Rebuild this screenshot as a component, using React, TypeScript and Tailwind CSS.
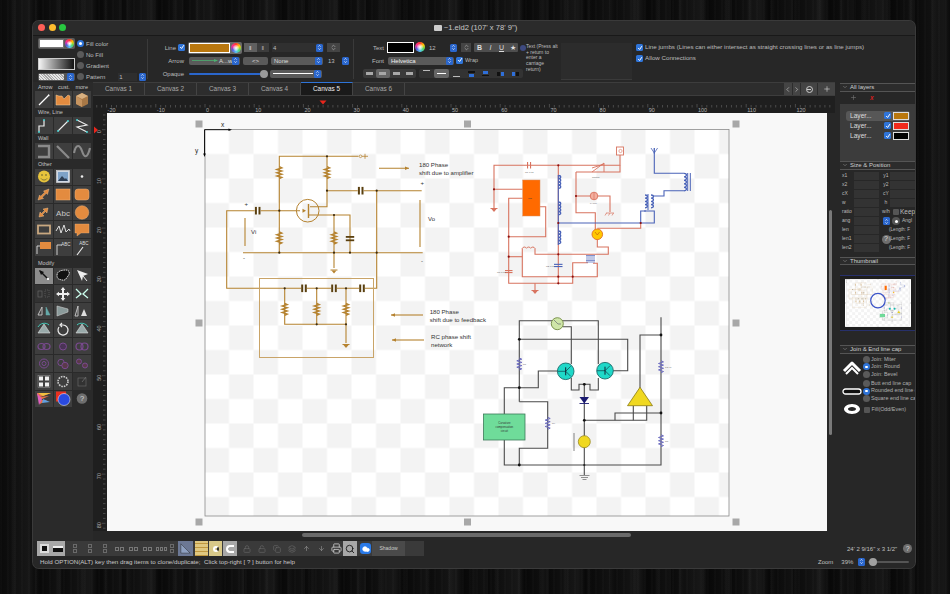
import React, { createContext, useContext } from "react";
import { ArrowUp, ArrowDown, Lock, LockOpen, Printer, Search, Cloud, Plus, ChevronLeft, ChevronRight, ChevronDown, ChevronsUpDown, Copy, Layers } from "lucide-react";

const BR = "#b5822f";
const RD = "#d8735f";
const BL = "#4a63b8";
const GY = "#4a4a4a";
const NoText = createContext(false);

const W = ({ p, c, w = 1.1 }: { p: string; c: string; w?: number }) => <polyline points={p} fill="none" stroke={c} strokeWidth={w} />;
const D = ({ x, y, c = "#3a2a10", r = 1.1 }: { x: number; y: number; c?: string; r?: number }) => <circle cx={x} cy={y} r={r} fill={c} />;
const Res = ({ x, y, c, w = 1.4 }: { x: number; y: number; c: string; w?: number }) => (
  <path d={`M${x} ${y - 6}l2.5 1.2l-5 1.6l5 1.6l-5 1.6l5 1.6l-5 1.6l5 1.6l-2.5 1.2`} fill="none" stroke={c} strokeWidth={w} />
);
const Cap = ({ x, y, c = "#5a4010" }: { x: number; y: number; c?: string }) => (
  <g>
    <rect x={x - 3} y={y - 3.8} width={6} height={7.6} fill="#fff" />
    <rect x={x - 2.8} y={y - 3.8} width={2} height={7.6} fill={c} />
    <rect x={x + 0.8} y={y - 3.8} width={2} height={7.6} fill={c} />
  </g>
);
const Coil = ({ x, y, c, n = 4, h = 3.2 }: { x: number; y: number; c: string; n?: number; h?: number }) => {
  let d = `M${x} ${y}`;
  for (let i = 0; i < n; i++) d += `a2.4 ${h / 2} 0 1 1 0 ${h}`;
  return <path d={d} fill="none" stroke={c} strokeWidth={1.3} />;
};
const Gnd = ({ x, y, c }: { x: number; y: number; c: string }) => (
  <g>
    <line x1={x - 3.5} x2={x + 3.5} y1={y} y2={y} stroke={c} strokeWidth={1} />
    <path d={`M${x - 2.5} ${y + 0.5}h5l-2.5 3z`} fill={c} />
  </g>
);
const T = ({ x, y, s, size = 6.1, c = "#333", a }: { x: number; y: number; s: string; size?: number; c?: string; a?: "middle" }) => {
  const hide = useContext(NoText);
  if (hide) return null;
  return <text x={x} y={y} fontSize={size} fill={c} textAnchor={a} fontFamily="Liberation Sans, sans-serif">{s}</text>;
};
const Arrow = ({ x1, x2, y, c = BR }: { x1: number; x2: number; y: number; c?: string }) => {
  const dir = x2 > x1 ? -1 : 1;
  return (
    <g>
      <line x1={x1} x2={x2} y1={y} y2={y} stroke={c} strokeWidth={1.1} />
      <path d={`M${x2} ${y}l${dir * 4} -1.8v3.6z`} fill={c} />
    </g>
  );
};

function Diagram() {
  const handles = [[199, 124], [467.5, 124], [736, 124], [199, 323], [736, 323], [199, 522], [467.5, 522], [736, 522]];
  return (
    <>
      <defs>
        <pattern id="chk" x="204.5" y="129.5" width="49" height="49" patternUnits="userSpaceOnUse">
          <rect width="49" height="49" fill="#fff" />
          <rect x="24.5" width="24.5" height="24.5" fill="#f3f3f3" />
          <rect y="24.5" width="24.5" height="24.5" fill="#f3f3f3" />
        </pattern>
      </defs>
      <rect x="205" y="129.5" width="524" height="386.5" fill="url(#chk)" stroke="#8a8a8a" strokeWidth="0.8" />
      {handles.map(([x, y]) => <rect key={`${x}-${y}`} x={x - 3.5} y={y - 3.5} width="7" height="7" fill="#a8a8a8" />)}
      {/* axes */}
      <line x1="204.5" y1="129.7" x2="229" y2="129.7" stroke="#000" strokeWidth="0.9" />
      <line x1="204.5" y1="129.7" x2="204.5" y2="154" stroke="#000" strokeWidth="0.9" />
      <path d="M232 129.7l-3.5 -1.3v2.6zM204.5 157l-1.3 -3.5h2.6z" fill="#000" />
      <T x={221} y={127} s="x" size={6.5} c="#222" />
      <T x={195} y={153} s="y" size={6.5} c="#222" />

      {/* amplifier */}
      <W c={BR} p="279.3,252.7 279.3,156.3 358.5,156.3" />
      <circle cx="360.5" cy="156.3" r="1.3" fill="none" stroke={BR} strokeWidth="0.7" />
      <path d="M362 156.3h6M365 153.8v5" stroke={BR} strokeWidth="0.8" fill="none" />
      <W c={BR} p="327,156.3 327,206.7 310,206.7" />
      <W c={BR} p="327,190.7 421.7,190.7" />
      <W c={BR} p="376.7,190.7 376.7,288.3 226.7,288.3 226.7,210.7 300,210.7" />
      <W c={BR} p="308.5,215 350,215 350,252.7" />
      <W c={BR} p="334,215 334,268" />
      <W c={BR} p="243,252.7 422.7,252.7" />
      <circle cx="307.7" cy="210.7" r="11.3" fill="none" stroke={BR} strokeWidth="1" />
      <line x1="308.5" y1="204" x2="308.5" y2="218" stroke={BR} strokeWidth="1.4" />
      <path d="M306 210.7l-3.5 -2v4z" fill={BR} />
      <Res x={279.3} y={172.7} c={BR} />
      <Res x={279.3} y={238} c={BR} />
      <Res x={327} y={172.7} c={BR} />
      <Res x={334} y={238} c={BR} />
      <Cap x={360.7} y={190.7} />
      <Cap x={257.7} y={210.7} />
      <rect x="345.8" y="236" width="8.4" height="1.8" fill="#5a4010" />
      <rect x="345.8" y="239.4" width="8.4" height="1.8" fill="#5a4010" />
      <Gnd x={334} y={270} c={BR} />
      {[[327, 156.3], [327, 190.7], [376.7, 190.7], [279.3, 210.7], [334, 215], [279.3, 252.7], [334, 252.7], [350, 252.7], [376.7, 252.7]].map(([x, y]) => <D key={`${x}-${y}`} x={x} y={y} />)}
      <line x1="245" y1="218" x2="245" y2="246" stroke={BR} strokeWidth="1.1" />
      <line x1="420" y1="200" x2="420" y2="247" stroke={BR} strokeWidth="1.1" />
      <T x={251} y={234} s="Vi" size={6} />
      <T x={428} y={221} s="Vo" size={6} />
      <T x={244.5} y={206} s="+" size={6} />
      <T x={243} y={260} s="-" size={6} />
      <T x={420.5} y={185} s="+" size={6} />
      <T x={421} y={263} s="-" size={6} />
      <Arrow x1={379} x2={409} y={168.3} />
      <T x={419} y={167} s="180 Phase" />
      <T x={419} y={175} s="shift due to amplifier" />
      {/* feedback */}
      <rect x="259.5" y="278.5" width="114" height="79" fill="none" stroke="#c9a468" strokeWidth="1" />
      <W c={BR} p="284.7,288.3 284.7,324.3 346,324.3" />
      <W c={BR} p="316.7,288.3 316.7,324.3" />
      <W c={BR} p="346,288.3 346,343" />
      <Res x={284.7} y={309.3} c={BR} />
      <Res x={316.7} y={309.3} c={BR} />
      <Res x={346} y={309.3} c={BR} />
      <Cap x={304} y={288.3} />
      <Cap x={334} y={288.3} />
      <Cap x={362} y={288.3} />
      <Gnd x={346} y={344.5} c={BR} />
      {[[284.7, 288.3], [316.7, 288.3], [346, 288.3], [316.7, 324.3], [346, 324.3]].map(([x, y]) => <D key={`f${x}-${y}`} x={x} y={y} />)}
      <Arrow x1={423} x2={391} y={315} />
      <Arrow x1={424} x2={392} y={340} />
      <T x={429.7} y={314} s="180 Phase" />
      <T x={429.7} y={322} s="shift due to feedback" />
      <T x={431} y={339} s="RC phase shift" />
      <T x={431} y={346.5} s="network" />

      {/* red circuit */}
      <W c={RD} p="494,208 494,165.3 620,165.3 620,155" />
      <W c={RD} p="494,189.3 522.7,189.3" />
      <W c={RD} p="522.7,198.3 508.7,198.3 508.7,283.3 572.7,283.3 572.7,262.7 588,262.7" />
      <W c={RD} p="540,206.7 545.7,206.7 545.7,236.7 508.7,236.7" />
      <W c={RD} p="508.7,256.7 522.3,256.7" />
      <W c={RD} p="522.3,248.3 522.3,276.7 597.3,276.7 597.3,263.3 593,263.3" />
      <W c={RD} p="535,248.3 535,254.3 608.3,254.3 608.3,247 597.3,247 597.3,239" />
      <W c={RD} p="576,172 620,172 620,165.3" />
      <W c={RD} p="576,172 576,212.7 595.3,212.7 595.3,230" />
      <W c={RD} p="576,196 610,196 610,212" />
      <W c={RD} p="597.3,228.3 640.7,228.3 640.7,223" />
      <W c={RD} p="535,283.3 535,290" />
      <W c={BL} p="558.3,223 654.3,223 654.3,211 644,211" />
      <W c={RD} p="558.3,165.3 558.3,283.3" />
      <W c={BL} p="558.3,175 558.3,245" />
      <W c={BL} p="640.7,223 640.7,211 646,211" />
      <W c={BL} p="654.3,148 654.3,173.3 684,173.3" />
      <W c={BL} p="684,190.7 664,190.7 664,196 653.3,196" />
      <path d="M651 148l3.3 5l3.3 -5M654.3 148v6" fill="none" stroke={BL} strokeWidth="0.8" />
      <Coil x={684} y={173.3} c={BL} n={5} h={3.5} />
      <path d="M687.7 173v18M690.3 173v18" stroke={BL} strokeWidth="1" />
      <rect x="522.7" y="180" width="17.3" height="36" fill="#ff6a00" stroke="#d9905f" strokeWidth="0.5" />
      <T x={528} y={199} s="IC1" size={2.5} c="#333" />
      <Gnd x={494} y={208.5} c={RD} />
      <Gnd x={535} y={290.5} c={RD} />
      <rect x="527" y="162" width="1.1" height="6.5" fill={RD} />
      <rect x="530" y="162" width="1.1" height="6.5" fill={RD} />
      <Coil x={558.3} y={175.5} c={BL} n={4} h={3.2} />
      <Coil x={558.3} y={202} c={BL} n={4} h={3.2} />
      <Coil x={558.3} y={231} c={BL} n={4} h={3.2} />
      <path d="M522.3 248.3a2.4 2.4 0 0 1 4.2 0a2.4 2.4 0 0 1 4.2 0a2.4 2.4 0 0 1 4.2 0" fill="none" stroke={RD} strokeWidth="1" />
      <rect x="554" y="263.8" width="8.5" height="1.1" fill={BL} />
      <rect x="554" y="266" width="8.5" height="1.1" fill={BL} />
      <rect x="505" y="270" width="7.5" height="1.1" fill={RD} />
      <rect x="505" y="272" width="7.5" height="1.1" fill={RD} />
      <path d="M586 255.5h9M586 257h9M586 259h9M586 260.5h9M586 262h9" stroke={BL} strokeWidth="0.7" />
      <Coil x={645} y={195} c={BL} n={4} h={3.2} />
      <Coil x={651} y={195} c={BL} n={4} h={3.2} />
      <line x1="648" y1="194" x2="648" y2="210" stroke={BL} strokeWidth="1" />
      <circle cx="597.3" cy="234.3" r="5.3" fill="#ffc800" stroke="#e07020" strokeWidth="0.9" />
      <path d="M595 232l2.3 3l2.3 -3" stroke="#c05010" strokeWidth="0.6" fill="none" />
      <circle cx="594" cy="196" r="3.8" fill="#f4b0a0" stroke={RD} strokeWidth="0.9" />
      <path d="M594 192.5v7" stroke={RD} strokeWidth="0.7" />
      <path d="M592 172l12 -9M592 168l12 -4M604 163v9" stroke={RD} strokeWidth="0.9" fill="none" />
      <rect x="616.5" y="147" width="7" height="8" fill="#fff" stroke={RD} strokeWidth="0.9" />
      <circle cx="620.5" cy="151" r="1.6" fill="none" stroke={RD} strokeWidth="0.6" />
      <path d="M606 213h8M606.5 213l-1.5 2.500M610 213l-1.5 2.500M613.5 213l-1.5 2.500" stroke={RD} strokeWidth="0.7" fill="none" />
      {[[558.3, 165.3], [494, 189.3], [508.7, 236.7], [508.7, 256.7], [558.3, 223], [558.3, 254.3], [558.3, 276.7], [558.3, 283.3], [576, 196], [640.7, 223], [572.7, 276.7]].map(([x, y]) => <D key={`r${x}-${y}`} x={x} y={y} c="#8a1010" />)}
      <T x={525} y={173} s="C1 0.01" size={2.5} c="#666" />
      <T x={592} y={178} s="Switch" size={2.5} c="#666" />
      <T x={590} y={204} s="LAMP" size={2.5} c="#666" />
      <T x={546} y={267} s="C2 0.01" size={2.5} c="#666" />
      <T x={497} y={273} s="C3 0.01" size={2.5} c="#666" />

      {/* gray circuit */}
      <W c={GY} p="519.3,401.7 519.3,320.7 598.3,320.7 598.3,364" />
      <W c={GY} p="563,326.7 571.3,326.7 571.3,364" />
      <W c={GY} p="519.3,339.3 627.7,339.3 627.7,370.7 613,370.7" />
      <W c={GY} p="557.5,371 538.3,371 538.3,387.7 504.3,387.7 504.3,414" />
      <W c={GY} p="519.3,401.7 547.7,401.7 547.7,448.3 519.3,448.3 519.3,465" />
      <W c={GY} p="504.3,440 504.3,465 661,465 661,317.3" />
      <W c={GY} p="661,335 640,335 640,388" />
      <W c={GY} p="571.3,378 571.3,390 579,390 579,384.3 590,384.3 590,390 598.3,390 598.3,378" />
      <W c={GY} p="584.3,384.3 584.3,475" />
      <W c={GY} p="584.3,420.3 646.7,420.3 646.7,405.7" />
      <W c={GY} p="661,413 615,413 615,420.3" />
      <W c={GY} p="633.3,405.7 633.3,420.3" />
      <line x1="574" y1="433" x2="574" y2="451" stroke="#777" strokeWidth="0.9" />
      <path d="M579.5 475.5h10M581 477.5h7M582.5 479.5h4" stroke="#666" strokeWidth="0.7" />
      <Res x={519.3} y={364} c="#6a6ac0" w={1} />
      <Res x={547.7} y={423.3} c="#6a6ac0" w={1} />
      <Res x={661} y={366.7} c="#6a6ac0" w={1} />
      <Res x={661} y={440.7} c="#6a6ac0" w={1} />
      <circle cx="557.3" cy="323.7" r="6" fill="#cfe6a8" stroke="#708a40" strokeWidth="0.9" />
      <path d="M554 320l4 4h3" stroke="#556" strokeWidth="0.6" fill="none" />
      {[[565.7, 371.3], [605, 370.7]].map(([x, y]) => (
        <g key={x}>
          <circle cx={x} cy={y} r="8.3" fill="#1fd8c8" stroke="#1b6a6a" strokeWidth="0.9" />
          <line x1={x} x2={x} y1={y - 4} y2={y + 4} stroke="#123" strokeWidth="1" />
          <path d={`M${x} ${y}l5 -5M${x} ${y}l5 5M${x - 8} ${y}h8`} stroke="#123" strokeWidth="0.6" />
        </g>
      ))}
      <path d="M579.5 397h9.5l-4.700 6.500z" fill="#1a1a70" />
      <line x1="579.5" x2="589" y1="403.5" y2="403.5" stroke="#1a1a70" strokeWidth="0.9" />
      <circle cx="584.3" cy="441.7" r="6" fill="#f0d820" stroke="#9a8a20" strokeWidth="0.8" />
      <path d="M640 387.3l12.5 18.4h-25z" fill="#f0d820" stroke="#8a7a10" strokeWidth="0.8" />
      <rect x="483.5" y="414" width="41.5" height="26" fill="#6fdc9a" stroke="#3d7a5a" strokeWidth="0.8" />
      <T x={504.3} y={424} s="Curvature" size={2.8} a="middle" />
      <T x={504.3} y={428} s="compensation" size={2.8} a="middle" />
      <T x={504.3} y={432} s="circuit" size={2.8} a="middle" />
      {[[519.3, 339.3], [519.3, 387.7], [519.3, 465], [584.3, 384.3], [584.3, 420.3], [661, 335], [661, 413]].map(([x, y]) => <D key={`g${x}-${y}`} x={x} y={y} c="#111" r={1.4} />)}
      <D x={584.3} y={465} c="#222" />
      <T x={523} y={365} s="R1" size={2.5} c="#666" />
      <T x={552} y={424} s="R4" size={2.5} c="#666" />
      <T x={665} y={368} s="3.5 M" size={2.5} c="#666" />
      <T x={665} y={442} s="R3" size={2.5} c="#666" />
    </>
  );
}

const Radio = ({ on }: { on?: boolean }) => (
  <span className={`inline-flex w-[7px] h-[7px] rounded-full items-center justify-center shrink-0 ${on ? "bg-[#2f74d8]" : "bg-[#5a5a5a]"}`}>
    {on && <span className="w-[2.5px] h-[2.5px] rounded-full bg-white" />}
  </span>
);
const Check = ({ on = true }: { on?: boolean }) => (
  <span className={`inline-flex w-[7px] h-[7px] rounded-[1.5px] shrink-0 items-center justify-center ${on ? "bg-[#2f74d8]" : "bg-[#555]"}`}>
    {on && <svg viewBox="0 0 8 8" className="w-[6px] h-[6px]"><path d="M1.5 4l2 2l3 -4.500" fill="none" stroke="#fff" strokeWidth="1.3" /></svg>}
  </span>
);
const Step = () => (
  <span className="inline-flex w-[7px] h-[8px] rounded-[1.5px] bg-[#2a66cc] items-center justify-center shrink-0">
    <svg viewBox="0 0 6 8" className="w-[5px] h-[7px]"><path d="M1.5 3l1.500 -1.500l1.500 1.500M1.5 5l1.500 1.500l1.500 -1.500" fill="none" stroke="#fff" strokeWidth="0.8" /></svg>
  </span>
);
const Wheel = ({ s = 10 }: { s?: number }) => (
  <span style={{ width: s, height: s }} className="inline-block rounded-full shrink-0 bg-[conic-gradient(#ff3b30,#ffcc00,#4cd964,#5ac8fa,#5856d6,#ff2d92,#ff3b30)] p-[2px]">
    <span className="block w-full h-full rounded-full bg-[radial-gradient(#ffffff,#ffffff00)]" />
  </span>
);
const Popup = ({ w, children }: { w: string; children?: React.ReactNode }) => (
  <div className={`${w} h-[8px] rounded-[2px] bg-[#5a5a5a] flex items-center justify-between pl-[3px] pr-[1px] text-[#ddd] text-[6px]`}>
    <span className="flex-1 flex items-center">{children}</span>
    <Step />
  </div>
);
const Sep = ({ h = "h-[40px]" }: { h?: string }) => <div className={`w-px ${h} bg-[#3a3a3a] shrink-0`} />;

const Cell = ({ children, v = "n" }: { children?: React.ReactNode; v?: "n" | "l" | "d" | "x" }) => (
  <div className={`h-[16.6px] flex items-center justify-center ${v === "l" ? "bg-[#8c8c8c]" : v === "d" ? "bg-[#323232]" : v === "x" ? "bg-transparent" : "bg-[#3e3e3e]"}`}>
    <svg viewBox="0 0 18 17" className="w-[18px] h-[17px]">{children}</svg>
  </div>
);
const Head = ({ children, h = "h-[9.2px]" }: { children: React.ReactNode; h?: string }) => (
  <div className={`${h} flex items-end pl-[3px] pb-[1.5px] text-[5.5px] leading-none text-[#c4c4c4]`}>{children}</div>
);
const OR = "#e38b3f";
const Tx = ({ x, y, s, size, c }: { x: number; y: number; s: string; size: number; c: string }) => (
  <text x={x} y={y} fontSize={size} fill={c} textAnchor="middle" fontFamily="Liberation Sans, sans-serif">{s}</text>
);
const Tri = ({ c = "#9aa" }: { c?: string }) => (
  <g>
    <path d="M3 13l4 -8v8z" fill="none" stroke="#ccc" strokeWidth="0.9" />
    <path d="M11 5l4 8h-4z" fill={c} stroke={c} strokeWidth="0.5" />
  </g>
);

function LeftPanel() {
  const PU = "#7a4a90";
  return (
    <div className="w-[60px] shrink-0 pl-[2px] pr-[2px] bg-[#2a2a2a]">
      <div className="h-[9.2px] flex justify-between items-end text-[5.5px] leading-none pb-[1px] px-[3px] text-[#c4c4c4]"><span>Arrow</span><span>cust.</span><span>more</span></div>
      <div className="grid grid-cols-3 gap-px">
        <Cell><path d="M4 14L14 4" stroke="#fff" strokeWidth="1.3" /><path d="M14 3l.6 2.200l-2 -.6z" fill="#fff" /></Cell>
        <Cell><path d="M2 4l3 1h3l2 3l4 -4l2 1v9H2z" fill={OR} stroke="#f0d0a0" strokeWidth="0.5" /></Cell>
        <Cell><path d="M9 2l6 3v8l-6 3l-6 -3V5z" fill="#a87846" /><path d="M9 9v7l-6 -3V5z" fill="#c69460" /><path d="M9 2l6 3l-6 3l-6 -3z" fill="#d8b080" /></Cell>
      </div>
      <Head>Wire, Line</Head>
      <div className="grid grid-cols-3 gap-px">
        <Cell><path d="M4 15V9h5V3" fill="none" stroke="#eee" strokeWidth="1.2" /><circle cx="4" cy="15" r="1" fill="#4cc" /><circle cx="9" cy="3" r="1" fill="#4cc" /></Cell>
        <Cell><path d="M4 14L14 4" stroke="#eee" strokeWidth="1.1" /><circle cx="4" cy="14" r="1" fill="#4cc" /><circle cx="14" cy="4" r="1" fill="#4cc" /></Cell>
        <Cell><path d="M4 3l10 5l-10 2l10 5" fill="none" stroke="#eee" strokeWidth="1.1" /><circle cx="4" cy="3" r="1" fill="#4cc" /><circle cx="14" cy="15" r="1" fill="#4cc" /></Cell>
      </div>
      <Head>Wall</Head>
      <div className="grid grid-cols-3 gap-px">
        <Cell><path d="M3 3h11v11H3" fill="none" stroke="#8a8a8a" strokeWidth="2.4" /></Cell>
        <Cell><path d="M3 3l12 12" stroke="#8a8a8a" strokeWidth="2.2" /></Cell>
        <Cell><path d="M1 10c2 -10 6 -8 8 -2s5 9 8 -3" fill="none" stroke="#8a8a8a" strokeWidth="2.2" /></Cell>
      </div>
      <Head>Other</Head>
      <div className="grid grid-cols-3 gap-px">
        <Cell><circle cx="9" cy="8.5" r="6" fill="#e6c33c" /><circle cx="7" cy="7" r=".8" fill="#553" /><circle cx="11" cy="7" r=".8" fill="#553" /><path d="M6 10.5c1.500 2 4.500 2 6 0" stroke="#553" strokeWidth=".7" fill="none" /></Cell>
        <Cell><rect x="2.5" y="2.5" width="13" height="12" fill="#cfd8e4" stroke="#ddd" strokeWidth=".6" /><rect x="4" y="4" width="10" height="9" fill="#7ea2c8" /><path d="M4 13l4 -5l3 3l1 -1l2 3z" fill="#2f3f55" /></Cell>
        <Cell><circle cx="9" cy="8.5" r="1.3" fill="#eee" /></Cell>
        <Cell><path d="M3 14l1.500 -5l1.200 1.200l4 -4l-1.200 -1.200l5.500 -2l-1.500 5.500l-1.200 -1.200l-4 4l1.200 1.200z" fill={OR} stroke="#f3c99a" strokeWidth=".4" /></Cell>
        <Cell><rect x="2" y="3" width="14" height="11" fill={OR} stroke="#eeb27a" strokeWidth=".5" /></Cell>
        <Cell><rect x="2" y="3" width="14" height="11" rx="3" fill={OR} stroke="#eeb27a" strokeWidth=".5" /></Cell>
        <Cell><path d="M4 13l1 -5l1.500 1.500l3 -3l-1.500 -1.500l5 -1l-1 5l-1.500 -1.500l-3 3l1.500 1.500z" fill={OR} stroke="#f3c99a" strokeWidth=".4" /></Cell>
        <Cell><Tx x={9} y={11.5} s="Abc" size={8} c="#c8c8c8" /></Cell>
        <Cell><circle cx="9" cy="8.5" r="6.8" fill={OR} stroke="#eeb27a" strokeWidth=".5" /></Cell>
        <Cell><rect x="3" y="4.5" width="12" height="8" fill="none" stroke="#c9a880" strokeWidth="1.8" /></Cell>
        <Cell><path d="M2 10l3 -5l2 7l3 -8l2 7l3 -3l1 2" fill="none" stroke="#ddd" strokeWidth="1" /></Cell>
        <Cell><path d="M2 3h14v9H8l-4 3v-3H2z" fill={OR} stroke="#eeb27a" strokeWidth=".4" /></Cell>
        <Cell><rect x="5" y="3" width="11" height="7" fill={OR} /><path d="M2 15V7h3" fill="none" stroke="#ddd" strokeWidth=".9" /></Cell>
        <Cell><path d="M3 16V6h5" fill="none" stroke="#ddd" strokeWidth=".9" /><Tx x={12} y={7} s="ABC" size={4.5} c="#ddd" /></Cell>
        <Cell><path d="M4 16l6 -8" stroke="#eee" strokeWidth="1.1" /><Tx x={11} y={6} s="ABC" size={4.5} c="#ddd" /></Cell>
      </div>
      <Head h="h-[12px]">Modify</Head>
      <div className="grid grid-cols-3 gap-px">
        <Cell v="l"><path d="M5 4l7 7" stroke="#111" strokeWidth="1.4" /><path d="M4 3l2 5l3 -3z" fill="#111" /><rect x="12" y="11" width="2" height="2" fill="#eee" /></Cell>
        <Cell><path d="M3 8c0 -4 5 -5 9 -5s4 4 2 6s-2 5 -6 4s-5 -1 -5 -5z" fill="#111" stroke="#ddd" strokeWidth="1" strokeDasharray="1.5 .7" /></Cell>
        <Cell><path d="M4 3l11 4l-5 2l-1 5z" fill="#eee" /><path d="M10 9l4 5" stroke="#eee" strokeWidth="1" /></Cell>
        <Cell v="d"><rect x="3" y="6" width="4" height="6" fill="none" stroke="#666" strokeWidth=".7" /><rect x="10" y="5" width="4" height="7" fill="none" stroke="#666" strokeDasharray="1 1" strokeWidth=".7" /></Cell>
        <Cell><path d="M9 2l2.300 3H10v3h3V6.700L16 9l-3 2.300V10h-3v3h1.300L9 16l-2.300 -3H8v-3H5v1.300L2 9l3 -2.300V8h3V5H6.700z" fill="#eee" /></Cell>
        <Cell><path d="M3 4l5 5l-5 4M15 4l-5 5l5 4" fill="none" stroke="#cfe" strokeWidth="1.3" /></Cell>
        <Cell><Tri c="#6aa" /></Cell>
        <Cell><path d="M3 4l11 3v3l-11 4z" fill="#8a9a9a" stroke="#ccc" strokeWidth=".6" /></Cell>
        <Cell><path d="M2 14l3 -10v10z" fill="none" stroke="#ccc" strokeWidth=".9" /><path d="M8 14l3 -7l3 7z" fill="#ddd" /></Cell>
        <Cell><path d="M9 4l6 9H3z" fill="#9aa" stroke="#ddd" strokeWidth=".6" /><path d="M3 7c2 -4 8 -5 11 -2" fill="none" stroke="#4cb" strokeWidth="1" /></Cell>
        <Cell><path d="M5 7a5 5 0 1 0 4 -2H7M8 3l-2 2l2 2" fill="none" stroke="#eee" strokeWidth="1.2" /></Cell>
        <Cell><path d="M9 4l6 9H3z" fill="#9aa" stroke="#ddd" strokeWidth=".6" /><path d="M4 5c3 -3 9 -2 11 2" fill="none" stroke="#4cb" strokeWidth="1" /></Cell>
        <Cell><ellipse cx="6.5" cy="8.5" rx="3.5" ry="3" fill="none" stroke={PU} strokeWidth="1.2" /><ellipse cx="11.5" cy="8.5" rx="3.5" ry="3" fill="none" stroke={PU} strokeWidth="1.2" /></Cell>
        <Cell><circle cx="9" cy="8.5" r="3.5" fill="#4a3356" stroke={PU} strokeWidth="1" /></Cell>
        <Cell><circle cx="6.5" cy="8.5" r="3.5" fill="none" stroke={PU} strokeWidth="1.2" /><circle cx="11.5" cy="8.5" r="3.5" fill="none" stroke={PU} strokeWidth="1.2" /></Cell>
        <Cell><circle cx="9" cy="8.5" r="4.5" fill="none" stroke={PU} strokeWidth="1" /><circle cx="9" cy="8.5" r="2" fill="none" stroke={PU} strokeWidth="1" /></Cell>
        <Cell><circle cx="7" cy="7.5" r="3.2" fill="none" stroke={PU} strokeWidth="1" /><circle cx="11" cy="10.5" r="3.2" fill="#5a3a4a" stroke={PU} strokeWidth="1" /></Cell>
        <Cell><circle cx="6" cy="6.5" r="2.5" fill="#5a3a4a" stroke={PU} strokeWidth="1" /><circle cx="12" cy="10.5" r="2.5" fill="#5a3a4a" stroke={PU} strokeWidth="1" /></Cell>
        <Cell><g fill="#eee"><rect x="4" y="3.5" width="4" height="4" /><rect x="10" y="3.5" width="4" height="4" /><rect x="4" y="9.5" width="4" height="4" /><rect x="10" y="9.5" width="4" height="4" /></g><rect x="3" y="2.5" width="12" height="12" fill="none" stroke="#aaa" strokeWidth=".4" /></Cell>
        <Cell><circle cx="9" cy="8.5" r="5" fill="none" stroke="#ccc" strokeWidth="1.6" strokeDasharray="1.6 1" /></Cell>
        <Cell v="d"><rect x="5" y="5" width="8" height="8" fill="none" stroke="#666" strokeWidth=".7" /><path d="M9 9l4 -5" stroke="#777" strokeWidth=".7" /></Cell>
        <Cell><path d="M2 3h14L5 7l9 -1L5 10l7 0L5 14z" fill="#e8734a" /><path d="M3 3h13L8 6z" fill="#f0c040" /><path d="M2 3l2 12l3 -6z" fill="#e060c0" /><path d="M8 9l7 3l-8 1z" fill="#60a0e0" /></Cell>
        <Cell><rect x="2" y="1.5" width="10" height="10" fill="#e83020" /><circle cx="10" cy="9.5" r="6" fill="#2a4ae0" stroke="#fff" strokeWidth=".5" /></Cell>
        <Cell v="x"><circle cx="9" cy="8.5" r="5.3" fill="#6e6e6e" /><Tx x={9} y={11} s="?" size={7.5} c="#ddd" /></Cell>
      </div>
    </div>
  );
}

function TopBar() {
  return (
    <div className="h-[47px] flex shrink-0 bg-[#272727] border-t border-[#191919] text-[#bdbdbd] text-[6px] leading-none">
      <div className="w-[114px] shrink-0 flex pl-[5px] pt-[2px]">
        <div className="w-[37px] flex flex-col">
          <div className="h-[11px] flex items-center justify-between bg-[#5c5c5c] rounded-[2px] p-[1px] w-[37px]">
            <span className="w-[25px] h-[9px] bg-white border border-[#777]" /><Wheel s={9} />
          </div>
          <div className="h-[12px] mt-[9px] border border-[#ccc] bg-[linear-gradient(90deg,#f4f4f4,#111)]" />
          <div className="h-[8px] mt-[3px] rounded-[2px] bg-[#555] flex items-center justify-between pl-[1px] pr-[1px]">
            <span className="w-[25px] h-[6px] bg-[repeating-linear-gradient(45deg,#e6e6e6_0px,#e6e6e6_1px,#a8a8a8_1px,#a8a8a8_2px)]" /><Step />
          </div>
        </div>
        <div className="ml-[2px] flex flex-col">
          <div className="h-[11px] flex items-center gap-[2px]"><Radio on /><span>Fill color</span></div>
          <div className="h-[11px] flex items-center gap-[2px]"><Radio /><span>No Fill</span></div>
          <div className="h-[11px] flex items-center gap-[2px]"><Radio /><span>Gradient</span></div>
          <div className="h-[11px] flex items-center gap-[2px]"><Radio /><span>Pattern</span><span className="ml-[11px] w-[19px] bg-[#2e2e2e] h-[8px] flex items-center pl-[1px]">1</span><Step /></div>
        </div>
      </div>
      <div className="pt-[3px]"><Sep /></div>

      <div className="w-[205px] shrink-0 pt-[5px]">
        <div className="h-[13px] flex items-center">
          <span className="w-[28px] text-right">Line</span><span className="ml-[2px]"><Check /></span>
          <div className="ml-[3px] w-[54px] h-[12px] bg-[#6a6a6a] rounded-[2px] flex items-center p-[1px] gap-[1px]">
            <span className="flex-1 h-full border border-white bg-[#b9770e] p-0" /><Wheel s={10} />
          </div>
          <div className="ml-[2px] w-[25px] h-[9px] flex">
            <span className="w-[12.5px] bg-[#5f5f5f] flex items-center justify-center text-[#ddd]">‖</span>
            <span className="w-[12.5px] bg-[#3c3c3c] flex items-center justify-center text-[#bbb]">‖</span>
          </div>
          <div className="ml-[3px] w-[52px] h-[9px] bg-[#303030] flex items-center justify-between pl-[1px] pr-[1px]"><span>4</span><Step /></div>
          <div className="ml-[3px] w-[13px] h-[9px] bg-[#444] flex items-center justify-center"><ChevronsUpDown size={7} /></div>
        </div>
        <div className="h-[13px] flex items-center">
          <span className="w-[36px] text-right">Arrow</span>
          <div className="ml-[5px]">
            <Popup w="w-[51px]"><svg width="26" height="5" viewBox="0 0 26 5"><path d="M0 2.5h22" stroke="#4caf70" strokeWidth=".8" /><path d="M26 2.5l-4 -1.500v3z" fill="#4caf70" /></svg><span className="ml-[1px]">A...w</span></Popup>
          </div>
          <div className="ml-[3px] w-[25px] h-[8px] bg-[#5a5a5a] rounded-[2px] flex items-center justify-center text-[#ddd]">&lt;&gt;</div>
          <div className="ml-[3px]"><Popup w="w-[52px]">None</Popup></div>
          <span className="ml-[5px] w-[14px]">13</span><Step />
        </div>
        <div className="h-[13px] flex items-center">
          <span className="w-[36px] text-right">Opaque</span>
          <div className="ml-[5px] w-[72px] h-[2px] bg-[#2a66cc] rounded-full" />
          <span className="w-[8px] h-[8px] rounded-full bg-[#9a9a9a] -ml-[1px] shrink-0" />
          <div className="ml-[2px]"><Popup w="w-[52px]"><span className="block w-[40px] h-[1.5px] bg-white" /></Popup></div>
        </div>
      </div>
      <div className="pt-[3px]"><Sep /></div>

      <div className="w-[172px] shrink-0 pt-[5px]">
        <div className="h-[13px] flex items-center">
          <span className="w-[30px] text-right">Text</span>
          <div className="ml-[3px] w-[27px] h-[11px] border border-white bg-black" />
          <span className="ml-[1px]"><Wheel s={10} /></span>
          <span className="ml-[4px] w-[21px] h-[8px] flex items-center">12</span><Step />
          <div className="ml-[4px] w-[10px] h-[9px] bg-[#444] flex items-center justify-center"><ChevronsUpDown size={7} /></div>
          <div className="ml-[3px] w-[44px] h-[9px] flex bg-[#4e4e4e] text-[#ddd] rounded-[1px] text-[7px]">
            <span className="flex-1 flex items-center justify-center font-bold">B</span>
            <span className="flex-1 flex items-center justify-center italic">I</span>
            <span className="flex-1 flex items-center justify-center underline">U</span>
            <span className="flex-1 flex items-center justify-center">★</span>
          </div>
          <span className="ml-[2px] w-[6px] h-[6px] rounded-full bg-[#3e4a80] shrink-0" />
        </div>
        <div className="h-[13px] flex items-center">
          <span className="w-[30px] text-right">Font</span>
          <div className="ml-[4px]"><Popup w="w-[66px]"><span className="text-[#eee]">Helvetica</span></Popup></div>
          <span className="ml-[2px]"><Check /></span><span className="ml-[2px] text-[5.5px]">Wrap</span>
        </div>
        <div className="h-[13px] flex items-center pl-[9px]">
          <div className="w-[53px] h-[9px] flex bg-[#3a3a3a] rounded-[2px]">
            {[0, 1, 2, 3].map((i) => (
              <span key={i} className={`flex-1 flex items-center justify-center rounded-[2px] ${i === 1 ? "bg-[#666]" : ""}`}><span className="w-[7px] h-[3px] bg-[#a8a8a8]" /></span>
            ))}
          </div>
          <div className="ml-[3px] w-[104px] h-[9px] flex bg-[#333] rounded-[2px]">
            <span className="flex-1 flex justify-center pt-[1px]"><span className="w-[7px] h-[1px] bg-[#bbb]" /></span>
            <span className="flex-1 flex items-center justify-center bg-[#666] rounded-[2px]"><span className="w-[9px] h-[1px] bg-white" /></span>
            <span className="flex-1 flex items-end justify-center pb-[1px]"><span className="w-[7px] h-[1px] bg-[#bbb]" /></span>
            <span className="flex-1 flex flex-col items-center justify-center"><span className="w-[7px] h-[2px] bg-[#111]" /><span className="w-[5px] h-[3px] mt-[1px] bg-[#2f6fd8]" /></span>
            <span className="flex-1 flex flex-col items-center justify-center"><span className="w-[5px] h-[3px] bg-[#2f6fd8]" /><span className="w-[7px] h-[1.5px] mt-[1px] bg-[#111]" /></span>
            <span className="flex-1 flex items-center justify-center gap-[1px]"><span className="w-[3px] h-[4px] bg-[#111]" /><span className="w-[3px] h-[4px] bg-[#2f6fd8]" /></span>
            <span className="flex-1 flex items-center justify-center gap-[1px]"><span className="w-[3px] h-[4px] bg-[#2f6fd8]" /><span className="w-[3px] h-[4px] bg-[#111]" /></span>
          </div>
        </div>
      </div>
      <div className="w-[35px] shrink-0 pt-[8px] text-[5px] leading-[5.7px]">Text (Press alt<br />+ return to<br />enter a<br />carriage<br />return)</div>
      <div className="w-[71px] h-[37px] mt-[7px] shrink-0 bg-[#2c2c2c] border-b border-[#3a3a3a]" />
      <div className="ml-[4px] pt-[6px] text-[6.2px]">
        <div className="h-[11px] flex items-center gap-[2px] whitespace-nowrap"><Check /><span>Line jumbs (Lines can either intersect as straight crossing lines or as line jumps)</span></div>
        <div className="h-[11px] flex items-center gap-[2px]"><Check /><span>Allow Connections</span></div>
      </div>
    </div>
  );
}

function Tabs() {
  return (
    <div className="w-[742px] h-[14px] flex bg-[#2d2d2d] border-y border-[#3d3d3d] text-[6.4px] text-[#a8a8a8] shrink-0">
      {[1, 2, 3, 4, 5, 6].map((n) => (
        <div key={n} className={`w-[52px] flex items-center justify-center border-r border-[#444] ${n === 5 ? "bg-[#1a1a1a] text-[#eee] border-t border-t-[#2f74d8] -mt-px" : ""}`}>Canvas {n}</div>
      ))}
      <div className="flex-1" />
      <div className="flex h-full bg-[#444] text-[#ccc]">
        <span className="w-[8.5px] flex items-center justify-center border-r border-[#2d2d2d]"><ChevronLeft size={9} /></span>
        <span className="w-[8.5px] flex items-center justify-center border-r border-[#2d2d2d]"><ChevronRight size={9} /></span>
        <span className="w-[17px] flex items-center justify-center border-r border-[#2d2d2d]"><span className="w-[7px] h-[7px] rounded-full border border-[#ccc] flex items-center justify-center"><span className="w-[4px] h-px bg-[#ccc]" /></span></span>
        <span className="w-[17px] flex items-center justify-center"><Plus size={8} /></span>
      </div>
    </div>
  );
}

function TopRuler() {
  const ticks: React.ReactNode[] = [];
  for (let i = -22; i <= 127; i++) {
    const x = 205 + i * 4.92;
    const major = i % 10 === 0;
    ticks.push(<line key={i} x1={x} x2={x} y1={major ? 104 : 105} y2={107.5} stroke="#777" strokeWidth="0.5" />);
    if (major) ticks.push(<text key={`t${i}`} x={x + 1} y={112} fontSize="5.5" fill="#b0b0b0" fontFamily="Liberation Sans, sans-serif">{i}</text>);
  }
  return (
    <div className="w-[742px] h-[17px] shrink-0 bg-[#1f1f1f]">
      <svg viewBox="93 96 742 17" className="w-[742px] h-[17px] block">
        {ticks}
        <path d="M319.5 100.5h7l-3.500 4z" fill="#e8261c" />
      </svg>
    </div>
  );
}

function LeftRuler() {
  const ticks: React.ReactNode[] = [];
  for (let i = -3; i <= 82; i++) {
    const y = 129.7 + i * 4.92;
    const major = i % 10 === 0;
    ticks.push(<line key={i} y1={y} y2={y} x1={major ? 102 : 103} x2={105.5} stroke="#777" strokeWidth="0.5" />);
    if (major) ticks.push(<text key={`t${i}`} x={0} y={0} transform={`translate(101 ${y + 2}) rotate(-90)`} textAnchor="middle" fontSize="5.5" fill="#b0b0b0" fontFamily="Liberation Sans, sans-serif">{i}</text>);
  }
  return (
    <div className="w-[14px] h-[418px] shrink-0 bg-[#1f1f1f]">
      <svg viewBox="93 113 14 418" className="w-[14px] h-[418px] block">
        {ticks}
        <path d="M94 126.5v7l4 -3.500z" fill="#e8261c" />
      </svg>
    </div>
  );
}

const SecHead = ({ children }: { children: React.ReactNode }) => (
  <div className="h-[8.5px] flex items-center gap-[2px] pl-[2px] bg-[#2c2c2c] border-y border-[#555] text-[6px] text-[#d0d0d0] shrink-0 leading-none">
    <ChevronDown size={6} className="text-[#999]" /><span>{children}</span>
  </div>
);
const Fld = () => <span className="w-[25px] h-[8px] bg-[#333] shrink-0" />;
const SizeRow = ({ a, b, mid, right }: { a: string; b?: string; mid?: React.ReactNode; right?: React.ReactNode }) => (
  <div className="h-[9px] flex items-center text-[5px] text-[#bbb] shrink-0 pl-[2px] whitespace-nowrap">
    <span className="w-[12px] shrink-0">{a}</span><Fld />
    <span className="w-[11px] shrink-0 flex items-center justify-center pl-[3px]">{mid ?? b}</span>
    {right}
  </div>
);

function RightPanel() {
  return (
    <div className="w-[75px] shrink-0 bg-[#272727] overflow-hidden flex flex-col pt-[1px]">
      <SecHead>All layers</SecHead>
      <div className="h-[12px] flex items-center text-[8px] shrink-0">
        <Plus size={7} className="ml-[10px] text-[#777]" /><span className="ml-[13px] text-[#d32020] italic font-bold text-[6.5px]">x</span>
      </div>
      <div className="h-[57.5px] bg-[#3c3c3c] pt-[7px] pl-[6px] flex flex-col shrink-0">
        {[["#b9770e", true], ["#f02a1c", false], ["#000000", false]].map(([c, sel], i) => (
          <div key={i} className={`h-[10px] w-[64px] flex items-center rounded-[3px] text-[6.6px] text-[#ddd] pl-[4px] ${sel ? "bg-[#575757]" : ""}`}>
            <span className="w-[34px]">Layer...</span><Check />
            <span className="ml-[2px] w-[16px] h-[8px] border border-[#ddd]" style={{ background: c as string }} />
          </div>
        ))}
      </div>
      <SecHead>Size &amp; Position</SecHead>
      <div className="flex flex-col pt-[2px] h-[87px] shrink-0">
        <SizeRow a="x1" b="y1" right={<Fld />} />
        <SizeRow a="x2" b="y2" right={<Fld />} />
        <SizeRow a="cX" b="cY" right={<Fld />} />
        <SizeRow a="w" b="h" right={<Fld />} />
        <SizeRow a="ratio" b="w/h" right={<span className="flex items-center text-[6.5px] ml-[3px]"><span className="w-[6px] h-[6px] bg-[#555] rounded-[1px] mr-[1px]" />Keep</span>} />
        <SizeRow a="ang" mid={<Step />} right={<span className="flex items-center ml-[2px] gap-[2px] text-[5px]"><span className="w-[8px] h-[8px] rounded-full bg-[#555] flex items-center justify-center"><span className="w-[3px] h-[3px] rounded-full bg-white" /></span>Angl</span>} />
        <SizeRow a="len" right={<span className="text-[4.6px] -ml-[1px]">(Length: F</span>} />
        <SizeRow a="len1" mid={<span className="w-[9px] h-[9px] rounded-full bg-[#6e6e6e] flex items-center justify-center text-[7px] text-[#ddd] shrink-0">?</span>} right={<span className="text-[4.6px] -ml-[1px]">(Length: F</span>} />
        <SizeRow a="len2" right={<span className="text-[4.6px] -ml-[1px]">(Length: F</span>} />
      </div>
      <SecHead>Thumbnail</SecHead>
      <div className="h-[80px] shrink-0 pt-[10px]">
        <div className="h-[56px] bg-[#1e1e1e] border-y border-[#27306a] flex items-center justify-center relative">
          <NoText.Provider value={true}>
            <svg viewBox="199 124 537 398" className="w-[66px] h-[48px] bg-white block">
              <Diagram />
              <circle cx="467" cy="303" r="60" fill="none" stroke="#3d55c8" strokeWidth="10" />
            </svg>
          </NoText.Provider>
        </div>
      </div>
      <SecHead>Join &amp; End line cap</SecHead>
      <div className="flex pt-[2px] text-[5.4px] text-[#b0b0b0] leading-none whitespace-nowrap">
        <div className="w-[24px] shrink-0 flex flex-col items-center">
          <svg viewBox="0 0 20 16" className="w-[20px] h-[16px] mt-[3px]"><path d="M2 12L10 4l8 8" fill="none" stroke="#fff" strokeWidth="3" strokeLinejoin="round" /><path d="M4 15l6 -6l6 6" fill="none" stroke="#fff" strokeWidth="2" /></svg>
          <svg viewBox="0 0 20 7" className="w-[20px] h-[7px] mt-[13px]"><rect x="1" y="1" width="18" height="5" rx="2.5" fill="#111" stroke="#fff" strokeWidth="1.3" /></svg>
          <svg viewBox="0 0 16 10" className="w-[16px] h-[10px] mt-[9px]"><path fillRule="evenodd" d="M8 0c5 0 8 3 8 5s-3 5 -8 5s-8 -3 -8 -5s3 -5 8 -5zM8 3c-2.500 0 -4 1 -4 2s1.500 2 4 2s4 -1 4 -2s-1.500 -2 -4 -2z" fill="#fff" /></svg>
        </div>
        <div className="flex flex-col ml-[-1px]">
          <div className="h-[7.5px] flex items-center gap-[1px]"><Radio /><span>Join: Miter</span></div>
          <div className="h-[7.5px] flex items-center gap-[1px]"><Radio on /><span>Join: Round</span></div>
          <div className="h-[7.5px] flex items-center gap-[1px]"><Radio /><span>Join: Bevel</span></div>
          <div className="h-[2px]" />
          <div className="h-[7.4px] flex items-center gap-[1px]"><Radio /><span>Butt end line cap</span></div>
          <div className="h-[7.4px] flex items-center gap-[1px]"><Radio on /><span>Rounded end line cap</span></div>
          <div className="h-[7.4px] flex items-center gap-[1px]"><Radio /><span>Square end line cap</span></div>
          <div className="h-[8px] mt-[4px] flex items-center gap-[1px]"><span className="w-[5.5px] h-[5.5px] bg-[#555] rounded-[1px] ml-[1px] mr-[1px]" /><span>Fill(Odd/Even)</span></div>
        </div>
      </div>
    </div>
  );
}

const BC = ({ children, v = "n", w = "w-[14px]" }: { children?: React.ReactNode; v?: "n" | "l" | "b"; w?: string }) => (
  <span className={`${w} h-full flex items-center justify-center shrink-0 ${v === "l" ? "bg-[#a8a8a8]" : v === "b" ? "bg-[#6c7894]" : "bg-[#3a3a3a]"}`}>{children}</span>
);
const TwoV = () => <span className="flex flex-col gap-[1px]"><span className="w-[4px] h-[4px] border border-[#6a6a6a]" /><span className="w-[4px] h-[4px] border border-[#6a6a6a]" /></span>;
const TwoH = () => <span className="flex gap-[1px]"><span className="w-[4px] h-[4px] border border-[#777]" /><span className="w-[4px] h-[4px] border border-[#777]" /></span>;

function BottomBar() {
  return (
    <div className="h-[27px] shrink-0 flex bg-[#272727] text-[#c0c0c0] leading-none">
      <div className="w-[770px] pl-[4px] shrink-0">
        <div className="h-[15px] w-[387px] flex bg-[#3a3a3a]">
          <BC v="l"><span className="w-[9px] h-[9px] bg-[#111] border-2 border-[#ddd]" /></BC>
          <BC v="l"><span className="w-[10px] h-[6px] bg-[#111] border-t-2 border-[#eee]" /></BC>
          <span className="w-[2px]" />
          <BC w="w-[15px]"><TwoV /></BC><BC w="w-[15px]"><TwoV /></BC><span className="w-px" />
          <BC><TwoV /></BC><span className="w-px" />
          <BC w="w-[13px]"><TwoH /></BC><BC w="w-[14px]"><TwoH /></BC><BC w="w-[14px]"><TwoH /></BC>
          <BC w="w-[14px]"><span className="flex gap-[1px]"><span className="w-[3px] h-[4px] border border-[#777]" /><span className="w-[3px] h-[4px] border border-[#777]" /><span className="w-[3px] h-[4px] border border-[#777]" /></span></BC>
          <BC w="w-[8px]"><TwoV /></BC>
          <span className="w-[2px]" />
          <BC v="b" w="w-[15px]"><svg viewBox="0 0 14 14" className="w-[13px] h-[13px]"><path d="M2 2l10 10H2z" fill="#8ea0c0" stroke="#222" strokeWidth=".5" /></svg></BC>
          <span className="w-[2px]" />
          <BC w="w-[13px]"><span className="w-full h-full bg-[#d8bc70] bg-[repeating-linear-gradient(0deg,#c09840_0px,#c09840_1px,#e0c880_1px,#e0c880_4px)]" /></BC>
          <span className="w-px" />
          <BC w="w-[13px]"><span className="w-full h-full bg-[#d8c888] flex items-center justify-center"><span className="w-[6px] h-[6px] rounded-full border-2 border-white border-r-[#333]" /></span></BC>
          <span className="w-px" />
          <BC v="l" w="w-[14px]"><span className="w-[8px] h-[8px] rounded-l-full border-2 border-r-0 border-white" /></BC>
          <span className="w-[2px]" />
          {[Lock, LockOpen, Copy, Layers, ArrowUp, ArrowDown].map((I, i) => (
            <BC key={i} w="w-[15px]"><I size={i > 3 ? 7 : 8} className={i > 3 ? "text-[#999]" : "text-[#666]"} /></BC>
          ))}
          <BC><Printer size={11} className="text-[#c0c0c0]" /></BC>
          <BC v="l"><Search size={10} className="text-[#111]" /></BC>
          <span className="w-[2px]" />
          <BC w="w-[13px]"><span className="w-[11px] h-[11px] rounded-[3px] bg-[#2a7ae8] flex items-center justify-center"><Cloud size={8} className="text-white" fill="#fff" /></span></BC>
          <span className="w-[33px] flex items-center justify-center text-[5px] bg-[#4a4a4a] text-[#ccc] shrink-0">Shadow</span>
        </div>
        <div className="h-[12px] flex items-center pl-[3px] text-[6.2px] text-[#c8c8c8]">Hold OPTION(ALT) key then drag items to clone/duplicate;&nbsp; Click top-right [ ? ] button for help</div>
      </div>
      <div className="flex-1 flex flex-col">
        <div className="h-[15px] flex items-center pl-[44px] text-[6px] whitespace-nowrap">
          <span>24' 2 9/16" x 3 1/2"</span>
          <span className="ml-[6px] w-[9px] h-[9px] rounded-full bg-[#6e6e6e] flex items-center justify-center text-[7px] text-[#ddd]">?</span>
        </div>
        <div className="h-[12px] flex items-center pl-[15px] text-[6px]">
          <span>Zoom</span><span className="ml-[8px]">39%</span><span className="ml-[5px]"><Step /></span>
          <span className="ml-[3px] w-[41px] h-[2px] bg-[#555] rounded-full flex items-center"><span className="w-[8px] h-[8px] ml-[1px] rounded-full bg-[#a0a0a0]" /></span>
        </div>
      </div>
    </div>
  );
}

export default function App() {
  return (
    <div className="w-[950px] h-[594px] overflow-hidden pl-[33px] pt-[21px] bg-[#0d0d0d] bg-[repeating-linear-gradient(90deg,#ffffff00_0px,#ffffff08_1px,#ffffff00_2px,#ffffff00_7px),repeating-linear-gradient(90deg,#00000000_0px,#00000000_11px,#ffffff08_13px,#00000000_17px,#00000000_23px),repeating-linear-gradient(90deg,#0a0a0a_0px,#171717_29px,#080808_37px,#121212_61px)] font-['Liberation_Sans',sans-serif]">
      <div className="w-[882px] h-[547px] rounded-[6px] overflow-hidden flex flex-col bg-[#272727] shadow-[0_0_0_1px_#3a3a3a]">
        <div className="h-[14px] shrink-0 bg-[#2b2b2b] flex items-center relative text-[#c8c8c8] text-[7.6px]">
          <div className="absolute left-[5px] top-[3px] flex gap-[3.5px]">
            <span className="w-[7px] h-[7px] rounded-full bg-[#ff5f57]" />
            <span className="w-[7px] h-[7px] rounded-full bg-[#febc2e]" />
            <span className="w-[7px] h-[7px] rounded-full bg-[#28c840]" />
          </div>
          <div className="flex-1 flex items-center justify-center gap-[2px] pl-[3px]">
            <span className="w-[8px] h-[6.5px] bg-[#ccc] rounded-[1px]" />
            <span>~1.eld2 (107' x 78' 9")</span>
          </div>
        </div>
        <TopBar />
        <div className="flex h-[459px] shrink-0">
          <LeftPanel />
          <div className="w-[747px] shrink-0 flex flex-col">
            <Tabs />
            <TopRuler />
            <div className="flex h-[418px] shrink-0">
              <LeftRuler />
              <div className="w-[720px] h-[418px] bg-[#f8f8f8] shrink-0">
                <svg viewBox="107 113 720 418" className="w-[720px] h-[418px] block"><Diagram /></svg>
              </div>
              <div className="w-[13px] shrink-0 pt-[97px] pl-[2px]">
                <div className="w-[3px] h-[225px] rounded-full bg-[#7a7a7a]" />
              </div>
            </div>
            <div className="h-[10px] shrink-0 pt-[2px] pl-[209px]">
              <div className="w-[329px] h-[4px] rounded-full bg-[#6a6a6a]" />
            </div>
          </div>
          <RightPanel />
        </div>
        <BottomBar />
      </div>
    </div>
  );
}
